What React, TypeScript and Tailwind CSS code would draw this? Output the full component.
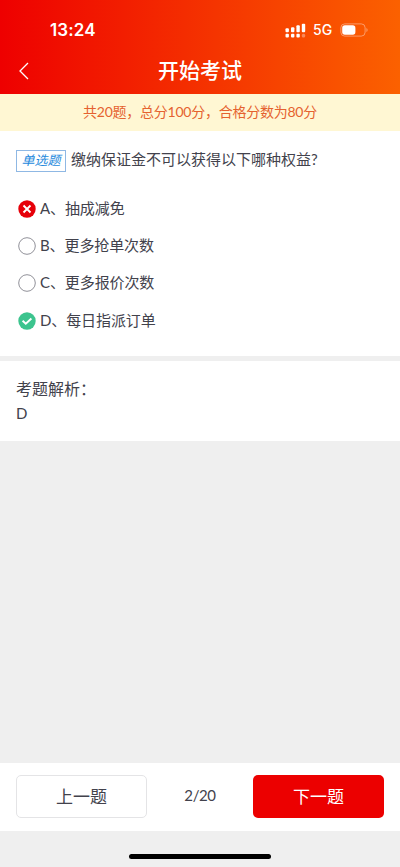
import React from "react";

type Mark = "wrong" | "right" | "empty";

const options: { label: string; text: string; mark: Mark }[] = [
  { label: "A", text: "抽成减免", mark: "wrong" },
  { label: "B", text: "更多抢单次数", mark: "empty" },
  { label: "C", text: "更多报价次数", mark: "empty" },
  { label: "D", text: "每日指派订单", mark: "right" },
];

function MarkIcon({ mark }: { mark: Mark }) {
  return (
    <svg width="18" height="18" viewBox="0 0 18 18" fill="none" className="shrink-0">
      {mark === "empty" && <circle cx="9" cy="9" r="8.3" stroke="#85858d" strokeWidth="0.9" />}
      {mark === "wrong" && (
        <>
          <circle cx="9" cy="9" r="8.7" fill="#e60009" />
          <path d="M5.5 5.5l7 7M12.5 5.5l-7 7" stroke="#fff" strokeWidth="1.9" />
        </>
      )}
      {mark === "right" && (
        <>
          <circle cx="9" cy="9" r="8.7" fill="#3cc48e" />
          <path d="M4.6 8.7l3.2 3.1 5.6-5.3" stroke="#fff" strokeWidth="1.9" />
        </>
      )}
    </svg>
  );
}

function Signal() {
  return (
    <svg width="21" height="15" viewBox="0 0 21 15" fill="#fff">
      <rect x="0.5" y="5.2" width="3.4" height="4" rx="1" />
      <rect x="6" y="4.2" width="3.4" height="5" rx="1" />
      <rect x="11.4" y="2.2" width="3.4" height="7" rx="1" />
      <rect x="16.8" y="0.7" width="3.4" height="8.5" rx="1" />
      <rect x="0.5" y="10.7" width="3.4" height="3.7" rx="1" />
      <rect x="6" y="10.7" width="3.4" height="3.7" rx="1" />
      <rect x="11.4" y="10.7" width="3.4" height="3.7" rx="1" />
      <rect x="16.8" y="10.7" width="3.4" height="3.7" rx="1.5" opacity="0.35" />
    </svg>
  );
}

function Battery() {
  return (
    <svg width="29" height="14" viewBox="0 0 29 14" fill="none">
      <rect x="0.9" y="0.9" width="24.2" height="12.2" rx="3.8" stroke="#fff" strokeOpacity="0.4" />
      <rect x="2.2" y="2.3" width="13.2" height="9.4" rx="2.6" fill="#fff" />
      <path d="M26.4 5v4c1.6-.6 1.6-3.4 0-4z" fill="#fff" fillOpacity="0.4" />
    </svg>
  );
}

export default function App() {
  return (
    <div
      lang="zh-CN"
      className="flex h-[867px] w-[400px] flex-col overflow-hidden bg-[#efefef] font-['Lato','Noto_Sans_CJK_SC',sans-serif] text-[#42424c]"
    >
      <header className="h-[94px] shrink-0 bg-[linear-gradient(90deg,#ee0000,#fb6100)] text-white">
        <div className="flex h-[47px] items-end justify-between pr-[31px] pl-[50px]">
          <span className="h-[29px] font-['Inter',sans-serif] text-[17px] leading-6 font-semibold tracking-[0.1px]">
            13:24
          </span>
          <div className="flex h-[34px] items-center">
            <Signal />
            <span className="ml-[7px] w-[27px] font-['Inter',sans-serif] text-[14px] leading-none font-medium">5G</span>
            <Battery />
          </div>
        </div>
        <div className="grid h-[47px] grid-cols-[40px_1fr_40px] items-center">
          <svg width="12" height="18" viewBox="0 0 12 18" fill="none" className="ml-[18px]">
            <path d="M10 1L2 9l8 8" stroke="#fff" strokeWidth="1.3" />
          </svg>
          <h1 className="h-[47px] text-center text-[21px] leading-[45px] font-medium">开始考试</h1>
        </div>
      </header>

      <div className="h-[37px] shrink-0 bg-[#fff7d3] text-center text-[14px] leading-[35px] tracking-[-0.25px] text-[#e5622f]">
        共20题，总分100分，合格分数为80分
      </div>

      <main className="h-[225px] shrink-0 bg-white px-4 pt-4">
        <div className="flex items-start">
          <span className="mt-[3px] flex h-[22px] w-[50px] shrink-0 items-center justify-center border border-[#8fb8e4] pb-px text-[13px] leading-none text-[#2589dc] italic">
            单选题
          </span>
          <h2 className="ml-[5px] text-[15px] leading-6 whitespace-nowrap">缴纳保证金不可以获得以下哪种权益?</h2>
        </div>
        <ul className="mt-[18px]">
          {options.map((o) => (
            <li key={o.label} className="flex h-[37.4px] items-center gap-1 pl-[2px] text-[15px] leading-6">
              <MarkIcon mark={o.mark} />
              <span className="pb-[2px] tracking-[-0.1px]">
                {o.label}、{o.text}
              </span>
            </li>
          ))}
        </ul>
      </main>

      <section className="mt-[5px] h-[80px] shrink-0 bg-white px-4 pt-4">
        <h3 className="text-[16px] leading-6">
          考题解析<span>：</span>
        </h3>
        <p className="text-[15px] leading-6">D</p>
      </section>

      <footer className="mt-auto shrink-0">
        <div className="flex h-[68px] items-center justify-between bg-white px-4 pb-px">
          <button className="h-[43px] w-[131px] rounded-[5px] border border-[#e4e4e6] text-[17px] leading-none">上一题</button>
          <span className="pb-[3px] text-[15px] tracking-[-0.4px]">2/20</span>
          <button className="h-[43px] w-[131px] rounded-[5px] bg-[#ec0000] text-[17px] leading-none text-white">下一题</button>
        </div>
        <div className="flex h-[36px] justify-center pt-[23px]">
          <div className="h-[5px] w-[142px] rounded-full bg-black" />
        </div>
      </footer>
    </div>
  );
}
